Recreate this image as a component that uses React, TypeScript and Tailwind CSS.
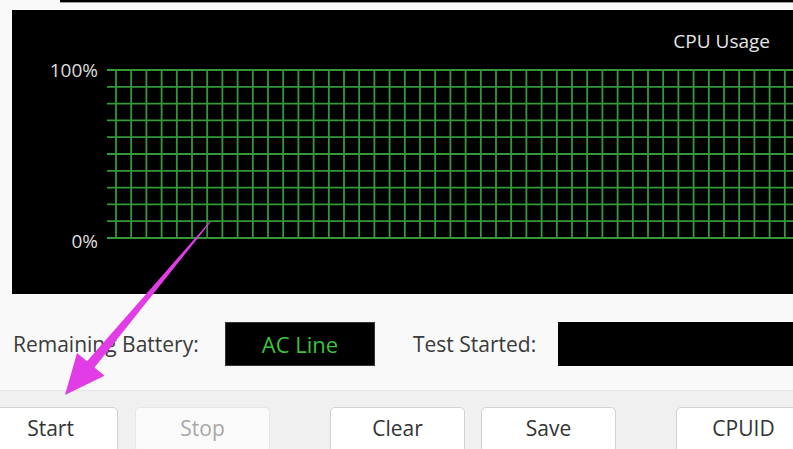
import React from 'react';

const font = { fontFamily: '"Open Sans", "Noto Sans", Arial, sans-serif' };

function UsageGrid() {
  const w = 686;
  const h = 170;
  const rows = Array.from({ length: 11 }, (_, i) => 1 + i * 16.8);
  const cols = Array.from({ length: 45 }, (_, j) => 9 + j * 15.2);
  return (
    <svg width={w} height={h} viewBox={`0 0 ${w} ${h}`} className="block">
      {rows.map((y) => (
        <line key={`r${y}`} x1={0} x2={w} y1={y} y2={y} stroke="#35983a" strokeWidth={1.8} />
      ))}
      {cols.map((x) => (
        <line key={`c${x}`} x1={x} x2={x} y1={1} y2={169} stroke="#35983a" strokeWidth={1.8} />
      ))}
    </svg>
  );
}

function Btn({ label, disabled, className = '' }: { label: string; disabled?: boolean; className?: string }) {
  return (
    <div
      className={`w-[135px] h-[46px] shrink-0 rounded-[5px] border flex items-start justify-center pt-[5px] text-[21px] ${
        disabled ? 'bg-[#fafafa] border-[#e6e6e6] text-[#a8a8a8]' : 'bg-white border-[#d2d2d2] text-[#333]'
      } ${className}`}
    >
      {label}
    </div>
  );
}

export default function App() {
  return (
    <div className="relative w-[793px] h-[449px] overflow-hidden bg-[#f9f9f9]" style={font}>
      {/* top input strip */}
      <div className="h-[10px] pl-[60px]">
        <div className="h-[3px] bg-black border-b border-[#9a9a9a]" />
      </div>

      {/* chart panel */}
      <div className="ml-[12px] h-[284px] bg-black flex flex-col">
        <div className="h-[59px] flex justify-end items-start pt-[17px] pr-[23px] text-[19px] text-[#e6e6e6]">
          CPU Usage
        </div>
        <div className="flex">
          <div className="w-[95px] h-[170px] flex flex-col justify-between items-end pr-[9px] text-[19px] text-[#dedede] leading-none">
            <span className="-mt-[8px]">100%</span>
            <span className="-mb-[12px]">0%</span>
          </div>
          <UsageGrid />
        </div>
      </div>

      {/* status row */}
      <div className="h-[96px] flex items-start pt-[28px] text-[21px] text-[#3a3a3a]">
        <span className="ml-[13px] mt-[7px] w-[212px]">Remaining Battery:</span>
        <div className="w-[150px] h-[44px] bg-black border border-[#333] flex items-center justify-center text-[22px] text-[#3cc43c]">
          AC Line
        </div>
        <span className="ml-[38px] mt-[7px] w-[145px]">Test Started:</span>
        <div className="flex-1 h-[44px] bg-black" />
      </div>

      {/* button bar */}
      <div className="h-[59px] bg-[#f0f0f0] border-t border-[#e6e6e6] flex items-start pt-[16px]">
        <Btn label="Start" className="-ml-[17px]" />
        <Btn label="Stop" disabled className="ml-[17px]" />
        <Btn label="Clear" className="ml-[60px]" />
        <Btn label="Save" className="ml-[16px]" />
        <Btn label="CPUID" className="ml-[60px]" />
      </div>

      {/* annotation arrow */}
      <svg className="absolute inset-0 pointer-events-none" width={793} height={449}>
        <polygon
          points="210.4,222.3 94.5,367.5 104.5,375.8 65,395 77,353 87,361.3 209.6,221.7"
          fill="#e23ce6"
        />
      </svg>
    </div>
  );
}
